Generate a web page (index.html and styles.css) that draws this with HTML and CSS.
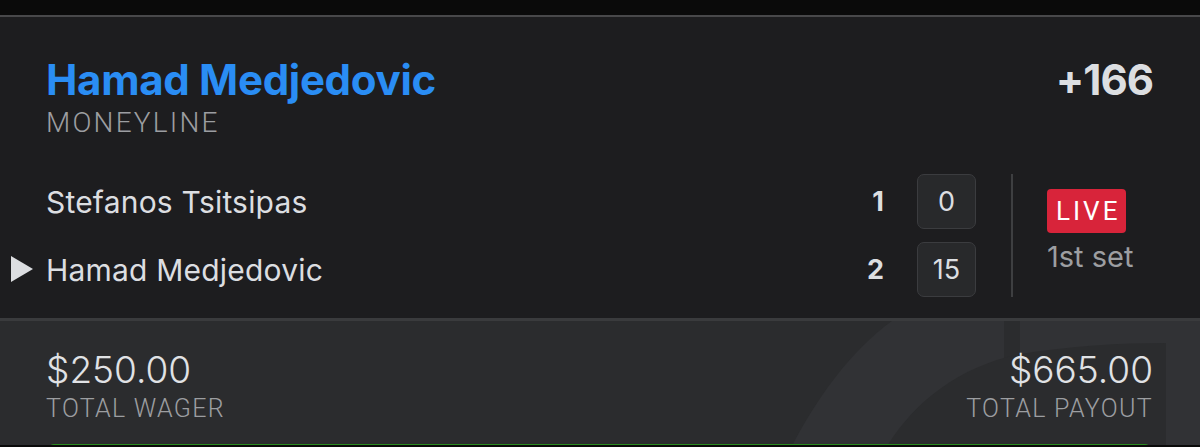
FILE: index.html
```html
<!DOCTYPE html>
<html lang="en">
<head>
    <meta charset="UTF-8">
    <meta name="viewport" content="width=device-width, initial-scale=1.0">
    <title>Bet Slip</title>
    <link rel="stylesheet" href="styles.css">
</head>
<body>
    <div class="topbar"></div>
    <div class="card">
        <div class="pick">
            <div>
                <div class="pick_name">Hamad Medjedovic</div>
                <div class="label big">MONEYLINE</div>
            </div>
            <div class="odds">+166</div>
        </div>

        <div class="match">
            <div class="players">
                <div class="player">
                    <span class="player_name">Stefanos Tsitsipas</span>
                    <span class="sets">1</span>
                    <span class="games">0</span>
                </div>
                <div class="player serving">
                    <span class="serve"></span>
                    <span class="player_name">Hamad Medjedovic</span>
                    <span class="sets">2</span>
                    <span class="games">15</span>
                </div>
            </div>
            <div class="divider"></div>
            <div class="status">
                <span class="live">LIVE</span>
                <span class="period">1st set</span>
            </div>
        </div>
    </div>

    <div class="totals">
        <svg class="mark" width="1200" height="125" viewBox="0 0 1200 125">
            <path d="M792 125 C815 80 850 30 892 0 L1200 0 L1200 125 Z" fill="#313235"/>
            <path d="M1004 0 L1020 0 L1020 36 L1004 38 Z" fill="#2b2c2e"/>
            <path d="M887 125 C915 80 960 45 1020 33 C1070 25 1120 22 1166 22 L1166 125 Z" fill="#2b2c2e"/>
        </svg>
        <div class="total">
            <div class="amount">$250.00</div>
            <div class="label">TOTAL WAGER</div>
        </div>
        <div class="total right">
            <div class="amount">$665.00</div>
            <div class="label">TOTAL PAYOUT</div>
        </div>
        <div class="place"></div>
    </div>
</body>
</html>
```

FILE: styles.css
```css
body
{
    margin: 0;
    background: #0a0a0a;
    font-family: 'Inter', 'Liberation Sans', sans-serif;
    color: #dcdee1;
    overflow: hidden;
}
.topbar
{
    height: 15px;
}
.card
{
    background: #1d1d1f;
    border-top: 2px solid #48484a;
    padding: 37px 47px 22px 46px;
    height: 303px;
    box-sizing: border-box;
}
.pick
{
    display: flex;
    justify-content: space-between;
    align-items: flex-start;
}
.pick_name
{
    color: #2a8df4;
    font-size: 42px;
    font-weight: 700;
    line-height: 52px;
    letter-spacing: -0.3px;
}
.odds
{
    font-size: 42px;
    font-weight: 700;
    line-height: 52px;
    color: #dcdee1;
    letter-spacing: -1px;
}
.label
{
    font-family: 'Roboto', 'Liberation Sans', sans-serif;
    font-size: 25px;
    font-weight: 300;
    letter-spacing: 1.3px;
    color: #9c9ea1;
    line-height: 30px;
}
.label.big
{
    font-size: 28px;
    letter-spacing: 2.2px;
    line-height: 32px;
    margin-top: 1px;
}
.match
{
    display: flex;
    align-items: center;
    margin-top: 35px;
}
.players
{
    flex: 1;
    display: flex;
    flex-direction: column;
    gap: 13px;
}
.player
{
    display: flex;
    align-items: center;
    position: relative;
}
.player_name
{
    flex: 1;
    font-size: 30px;
    letter-spacing: 0.2px;
    color: #dcdee1;
}
.serve
{
    position: absolute;
    left: -35px;
    top: 14px;
    border-left: 22px solid #dcdee1;
    border-top: 13px solid transparent;
    border-bottom: 13px solid transparent;
}
.sets
{
    font-size: 27px;
    font-weight: 700;
    width: 20px;
    text-align: right;
}
.games
{
    width: 57px;
    height: 53px;
    margin-left: 33px;
    border: 1px solid #3b3c3f;
    border-radius: 7px;
    background: #28292b;
    display: flex;
    align-items: center;
    justify-content: center;
    font-size: 27px;
    color: #dcdee1;
}
.divider
{
    width: 2px;
    height: 123px;
    background: #3e3f41;
    margin-left: 35px;
    margin-right: 34px;
}
.status
{
    display: flex;
    flex-direction: column;
    align-items: flex-start;
    width: 106px;
    margin-top: -8px;
}
.live
{
    background: #d8243a;
    color: #ffffff;
    font-family: 'Roboto', 'Liberation Sans', sans-serif;
    font-size: 26px;
    letter-spacing: 3px;
    padding: 5px 6px 5px 9px;
    border-radius: 4px;
    line-height: 34px;
}
.period
{
    font-size: 29px;
    color: #9c9ea1;
    margin-top: 6px;
}
.totals
{
    position: relative;
    background: #2b2c2e;
    border-top: 3px solid #3a3b3d;
    height: 127px;
    padding: 26px 47px 0 46px;
    box-sizing: border-box;
    display: flex;
    flex-wrap: wrap;
    justify-content: space-between;
}
.mark
{
    position: absolute;
    left: 0;
    top: 0;
}
.total
{
    position: relative;
}
.right
{
    text-align: right;
}
.amount
{
    font-size: 37px;
    font-weight: 300;
    line-height: 46px;
    color: #e0e2e5;
}
.total .label
{
    margin-top: 1px;
}
.place
{
    position: relative;
    flex-basis: 100%;
    height: 12px;
    margin: 20px 2px 0;
    background: #2a8a1f;
    border-radius: 6px;
}
```
